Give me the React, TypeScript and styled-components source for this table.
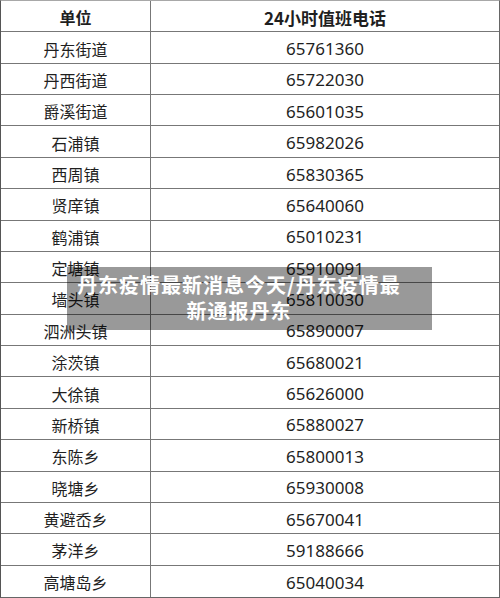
import React from 'react'
import styled, { createGlobalStyle } from 'styled-components'

const GlobalStyle = createGlobalStyle`
  html, body {
    margin: 0;
    padding: 0;
    background: #fff;
  }
  body {
    font-family: "Noto Sans", "Noto Sans CJK SC", sans-serif;
    color: #1f1f1f;
  }
`

const rows: [string, string][] = [
  ['丹东街道', '65761360'],
  ['丹西街道', '65722030'],
  ['爵溪街道', '65601035'],
  ['石浦镇', '65982026'],
  ['西周镇', '65830365'],
  ['贤庠镇', '65640060'],
  ['鹤浦镇', '65010231'],
  ['定塘镇', '65910091'],
  ['墙头镇', '65810030'],
  ['泗洲头镇', '65890007'],
  ['涂茨镇', '65680021'],
  ['大徐镇', '65626000'],
  ['新桥镇', '65880027'],
  ['东陈乡', '65800013'],
  ['晓塘乡', '65930008'],
  ['黄避岙乡', '65670041'],
  ['茅洋乡', '59188666'],
  ['高塘岛乡', '65040034'],
]

const Page = styled.div`
  position: relative;
  width: 500px;
  height: 598px;
`

const Table = styled.div`
  box-sizing: border-box;
  width: 500px;
  height: 598px;
  display: grid;
  grid-template-columns: 150px 1fr;
  grid-template-rows: repeat(19, 1fr);
  border-top: 1px solid #a8a8a8;
  border-left: 1px solid #555;
  border-right: 1px solid #666;
  border-bottom: 1px solid #666;
`

const Cell = styled.div<{ $head?: boolean; $first?: boolean; $last?: boolean }>`
  display: flex;
  align-items: center;
  justify-content: center;
  font-size: ${p => (p.$first ? '16px' : '17px')};
  font-weight: ${p => (p.$head ? 700 : 400)};
  font-family: ${p =>
    p.$first || p.$head
      ? '"Noto Sans CJK SC", "Noto Sans", sans-serif'
      : '"Noto Sans", "Noto Sans CJK SC", sans-serif'};
  border-right: ${p => (p.$first ? '1px solid #777' : 'none')};
  border-bottom: ${p => (p.$last ? 'none' : '1px solid #777')};
  padding-top: 2px;
`

const Banner = styled.div`
  position: absolute;
  left: 67px;
  top: 267px;
  width: 365px;
  height: 63px;
  box-sizing: border-box;
  padding: 5px 26px 0 5px;
  background: rgba(0, 0, 0, 0.4);
  color: #fff;
  font-family: "Noto Sans CJK SC", sans-serif;
  font-weight: 700;
  font-size: 20px;
  letter-spacing: 1px;
  line-height: 26px;
  text-align: center;
`

const App = () => (
  <Page>
    <GlobalStyle />
    <Table>
      <Cell $head $first>单位</Cell>
      <Cell $head>24小时值班电话</Cell>
      {rows.map(([name, phone], i) => (
        <React.Fragment key={name}>
          <Cell $first $last={i === rows.length - 1}>{name}</Cell>
          <Cell $last={i === rows.length - 1}>{phone}</Cell>
        </React.Fragment>
      ))}
    </Table>
    <Banner>丹东疫情最新消息今天/丹东疫情最新通报丹东</Banner>
  </Page>
)

export default App
